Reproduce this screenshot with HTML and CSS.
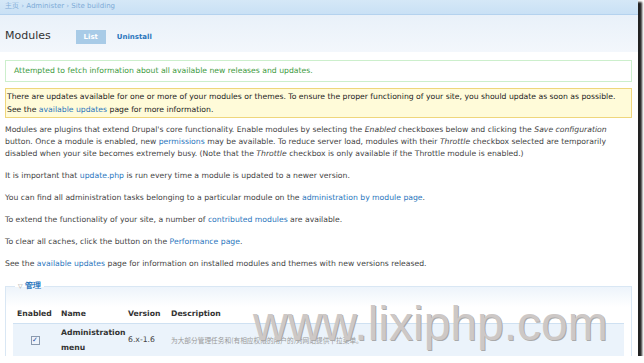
FILE: index.html
```html
<!DOCTYPE html>
<html lang="zh">
<head>
<meta charset="UTF-8">
<title>Modules</title>
<link rel="stylesheet" href="styles.css">
</head>
<body>

<div class="frame">
  <div class="breadcrumb"><a href="#">主页</a> › <a href="#">Administer</a> › <a href="#">Site building</a></div>

  <div class="header">
    <h2>Modules</h2>
    <ul class="tabs">
      <li class="active"><a href="#">List</a></li>
      <li><a href="#">Uninstall</a></li>
    </ul>
  </div>

  <div class="content">
    <div class="messages status">Attempted to fetch information about all available new releases and updates.</div>
    <div class="messages warning">There are updates available for one or more of your modules or themes. To ensure the proper functioning of your site, you should update as soon as possible.<br>See the <a href="#">available updates</a> page for more information.</div>

    <p>Modules are plugins that extend Drupal's core functionality. Enable modules by selecting the <em>Enabled</em> checkboxes below and clicking the <em>Save configuration</em><br>button. Once a module is enabled, new <a href="#">permissions</a> may be available. To reduce server load, modules with their <em>Throttle</em> checkbox selected are temporarily<br>disabled when your site becomes extremely busy. (Note that the <em>Throttle</em> checkbox is only available if the Throttle module is enabled.)</p>
    <p>It is important that <a href="#">update.php</a> is run every time a module is updated to a newer version.</p>
    <p>You can find all administration tasks belonging to a particular module on the <a href="#">administration by module page</a>.</p>
    <p>To extend the functionality of your site, a number of <a href="#">contributed modules</a> are available.</p>
    <p>To clear all caches, click the button on the <a href="#">Performance page</a>.</p>
    <p>See the <a href="#">available updates</a> page for information on installed modules and themes with new versions released.</p>

    <fieldset>
      <legend><span class="arrow">▽</span> <a href="#">管理</a></legend>
      <table>
        <thead>
          <tr><th class="col-enabled">Enabled</th><th class="col-name">Name</th><th class="col-version">Version</th><th>Description</th></tr>
        </thead>
        <tbody>
          <tr>
            <td class="center"><span class="checkbox">✓</span></td>
            <td class="name">Administration menu</td>
            <td>6.x-1.6</td>
            <td class="desc">为大部分管理任务和(有相应权限的用户的)对网站提供下拉菜单。</td>
          </tr>
        </tbody>
      </table>
    </fieldset>
  </div>

  <div class="watermark">www.lixiphp.com</div>
</div>

</body>
</html>
```

FILE: styles.css
```css
body {
  margin: 0;
  background: #fff;
  font-family: "DejaVu Sans", Verdana, sans-serif;
  color: #444;
}
a {
  color: #2a76bd;
  text-decoration: none;
}
.frame {
  position: relative;
  width: 638px;
  height: 356px;
  overflow: hidden;
  background: #fff;
  box-shadow: 3px 3px 2px 1px #222;
}
.breadcrumb {
  height: 14px;
  padding-left: 5px;
  font-size: 7px;
  line-height: 12px;
  color: #8ab4dc;
  background: linear-gradient(#d5e8f7, #c9e1f5);
  border-bottom: 1px solid #b4d2ee;
}
.breadcrumb a {
  color: #7eabd6;
}
.header {
  display: flex;
  align-items: center;
  height: 33px;
  padding: 4px 5px 0;
  background: linear-gradient(#e9f1f9, #f3f7fc);
}
.header h2 {
  margin: 0;
  font-size: 11px;
  font-weight: normal;
  color: #333;
}
.tabs {
  display: flex;
  align-items: center;
  gap: 11px;
  margin: 2px 0 0 25px;
  padding: 0;
  list-style: none;
}
.tabs li a {
  display: block;
  font-size: 7px;
  font-weight: bold;
  color: #2a76bd;
  line-height: 14px;
}
.tabs li.active a {
  background: #a8cbe7;
  color: #fff;
  width: 30px;
  text-align: center;
}
.content {
  padding: 8px 6px 0 5px;
  font-size: 7.7px;
  line-height: 12px;
}
.messages {
  margin-bottom: 6px;
  border: 1px solid;
}
.status {
  color: #3e9a3e;
  border-color: #ccefcc;
  padding: 4px 8px;
}
.warning {
  color: #222;
  background: #fffbd9;
  border-color: #efd67c;
  padding: 1px 0 1px 1px;
  line-height: 13px;
  white-space: nowrap;
}
p {
  margin: 0 0 10px;
}
.warning + p {
  margin-top: 6px;
}
fieldset {
  margin: 9px 0 0;
  padding: 6px 7px 0;
  border: 1px solid #d9e7f4;
  background: linear-gradient(#edf4fb, #fff 20px);
}
legend {
  padding: 0 3px;
  margin-left: 2px;
  font-weight: bold;
}
legend .arrow {
  color: #999;
  font-weight: normal;
  font-size: 6px;
}
legend a {
  color: #2a76bd;
}
table {
  width: 100%;
  table-layout: fixed;
  border-collapse: collapse;
  margin-top: 10px;
}
th {
  text-align: left;
  color: #333;
  padding: 0 4px 3px;
  border-bottom: 1px solid #cfe1f2;
}
td {
  padding: 1px 4px;
  background: #ebf3fb;
  vertical-align: middle;
}
.col-enabled {
  width: 36px;
}
.col-name {
  width: 59px;
}
.col-version {
  width: 35px;
}
.center {
  text-align: center;
}
.name {
  font-weight: bold;
  color: #333;
  line-height: 15px;
}
.desc {
  font-family: "Noto Sans CJK SC", sans-serif;
  font-size: 6.7px;
  color: #999;
  white-space: nowrap;
}
.checkbox {
  display: inline-block;
  width: 7px;
  height: 7px;
  border: 1px solid #8a9aae;
  background: #eef3fa;
  font-size: 7px;
  line-height: 7px;
  color: #2550a0;
}
.watermark {
  position: absolute;
  left: 253px;
  top: 300px;
  font-family: "Liberation Sans", Arial, sans-serif;
  font-size: 48px;
  line-height: 48px;
  color: #cdc8c6;
  text-shadow: 1px 1px 0 #aaa;
  white-space: nowrap;
}
```
